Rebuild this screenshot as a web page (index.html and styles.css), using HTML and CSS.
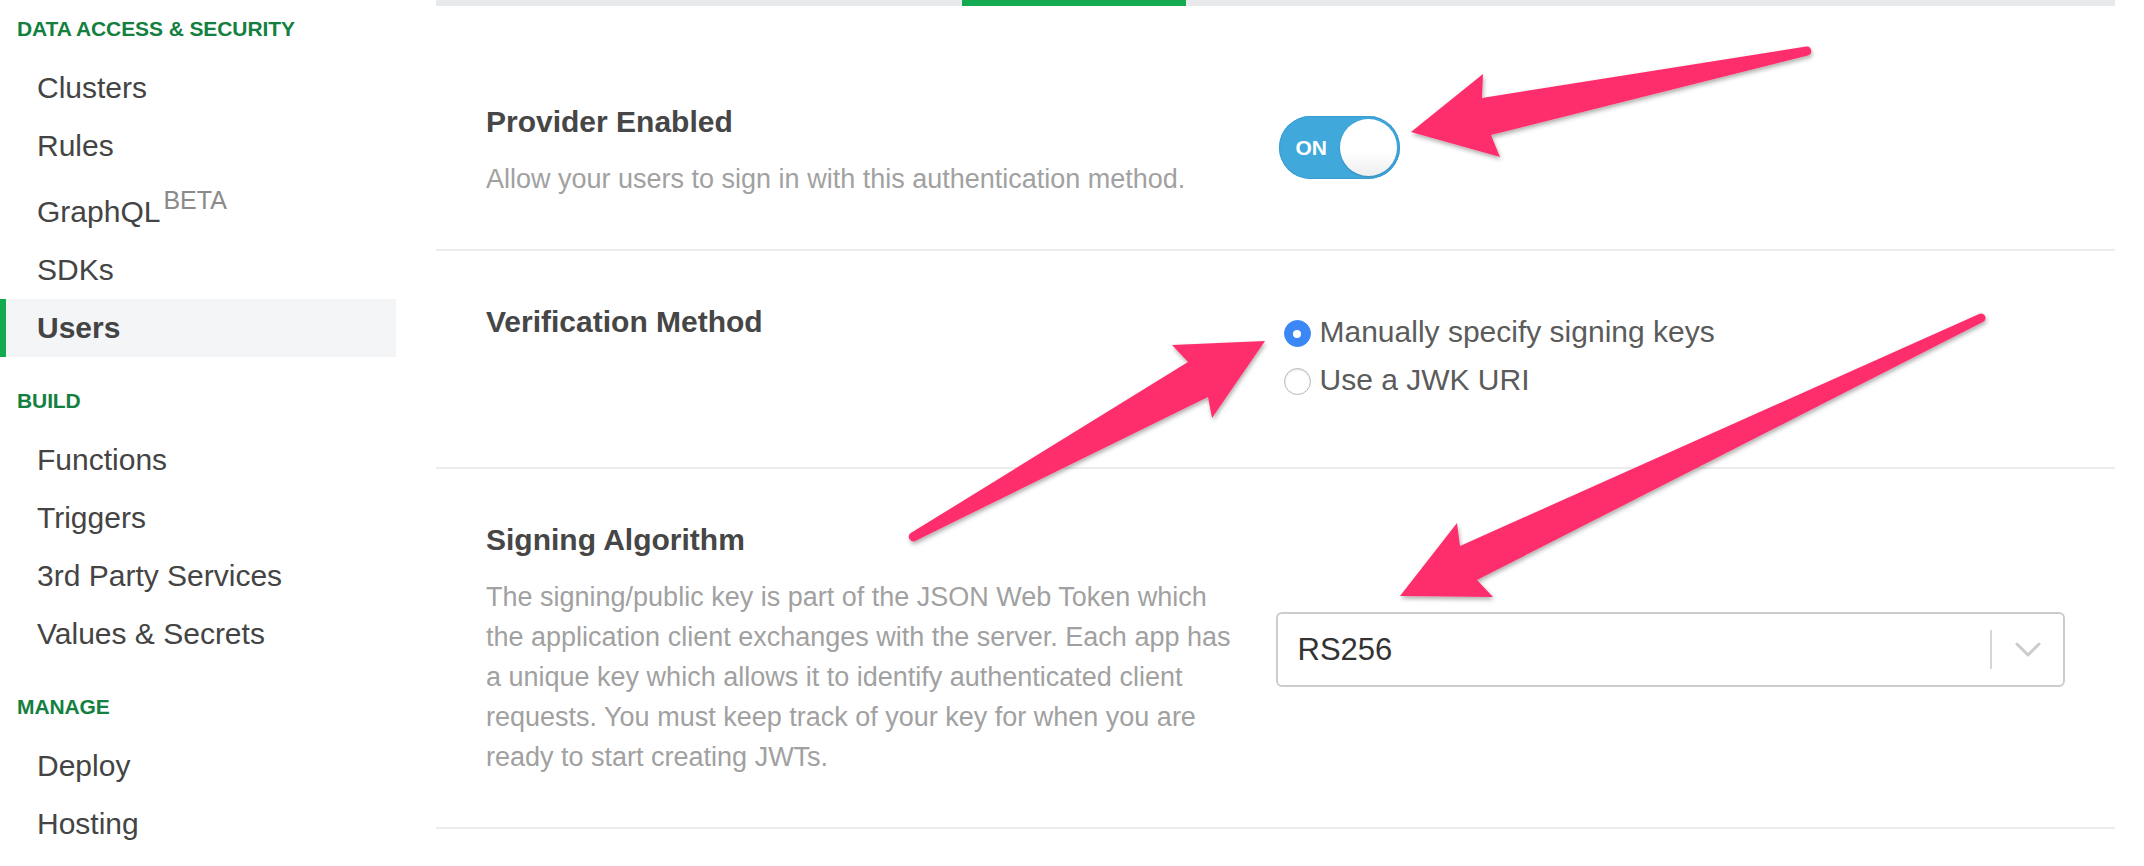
FILE: index.html
```html
<!DOCTYPE html>
<html lang="en">
<head>
<meta charset="utf-8">
<title>Users - Custom JWT Authentication</title>
<link rel="stylesheet" href="styles.css">
</head>
<body>
<div class="app">
  <nav class="sidebar">
    <div class="nav-header nav-header-first">DATA ACCESS &amp; SECURITY</div>
    <a class="nav-item">Clusters</a>
    <a class="nav-item">Rules</a>
    <a class="nav-item">GraphQL<sup class="beta">BETA</sup></a>
    <a class="nav-item">SDKs</a>
    <a class="nav-item nav-item-active">Users</a>
    <div class="nav-header">BUILD</div>
    <a class="nav-item">Functions</a>
    <a class="nav-item">Triggers</a>
    <a class="nav-item">3rd Party Services</a>
    <a class="nav-item">Values &amp; Secrets</a>
    <div class="nav-header">MANAGE</div>
    <a class="nav-item">Deploy</a>
    <a class="nav-item">Hosting</a>
  </nav>

  <main class="main">
    <div class="tabbar"><div class="tab-active"></div></div>

    <section class="row row-first">
      <div class="label">
        <h3 class="title">Provider Enabled</h3>
        <p class="desc">Allow your users to sign in with this authentication method.</p>
      </div>
      <div class="control">
        <div class="toggle">
          <span class="toggle-text">ON</span>
          <span class="knob"></span>
        </div>
      </div>
    </section>

    <section class="row row-top">
      <div class="label">
        <h3 class="title">Verification Method</h3>
      </div>
      <div class="control">
        <div class="radio-group">
          <label class="radio-row">
            <span class="radio radio-checked"><span class="radio-dot"></span></span>
            <span class="radio-text">Manually specify signing keys</span>
          </label>
          <label class="radio-row">
            <span class="radio"></span>
            <span class="radio-text">Use a JWK URI</span>
          </label>
        </div>
      </div>
    </section>

    <section class="row">
      <div class="label">
        <h3 class="title">Signing Algorithm</h3>
        <p class="desc">The signing/public key is part of the JSON Web Token which the application client exchanges with the server. Each app has a unique key which allows it to identify authenticated client requests. You must keep track of your key for when you are ready to start creating JWTs.</p>
      </div>
      <div class="control">
        <div class="select">
          <span class="select-value">RS256</span>
          <span class="select-sep"></span>
          <span class="select-indicator">
            <svg class="chevron" width="26" height="15" viewBox="0 0 26 15"><polyline points="2,2 13,13 24,2" fill="none" stroke="#cccccc" stroke-width="3" stroke-linecap="round" stroke-linejoin="round"/></svg>
          </span>
        </div>
      </div>
    </section>
  </main>
</div>

<svg class="annotations" width="2144" height="866" viewBox="0 0 2144 866">
  <defs>
    <filter id="arrowShadow" x="-10%" y="-10%" width="120%" height="130%">
      <feDropShadow dx="1" dy="2.5" stdDeviation="2" flood-color="#000" flood-opacity="0.32"/>
    </filter>
  </defs>
  <g fill="#fe2e6c" filter="url(#arrowShadow)">
    <path d="M1806.1 46.6 L1482 98 L1483 74 L1411 132 L1500 157 L1491 135 L1807.9 55.4 A4.5 4.5 0 0 0 1806.1 46.6 Z"/>
    <path d="M910.8 533.1 L1188 362 L1172 345 L1265 341 L1212 418 L1208 397 L915.2 540.9 A4.5 4.5 0 0 1 910.8 533.1 Z"/>
    <path d="M1979.1 313.9 L1460 546 L1457 523 L1400 596 L1493 597 L1477 580 L1982.9 322.1 A4.5 4.5 0 0 0 1979.1 313.9 Z"/>
  </g>
</svg>
</body>
</html>
```
FILE: styles.css
```css
html, body {
  margin: 0;
  padding: 0;
  width: 2144px;
  height: 866px;
  overflow: hidden;
  background: #ffffff;
}

body {
  position: relative;
  font-family: "Liberation Sans", Arial, Helvetica, sans-serif;
  color: #464646;
}

.app {
  display: flex;
  align-items: flex-start;
}

/* Sidebar */
.sidebar {
  width: 396px;
  flex: none;
  padding-top: 17px;
}

.nav-header {
  margin: 32px 0 18px;
  padding-left: 17px;
  font-size: 21px;
  line-height: 24px;
  font-weight: bold;
  color: #13803f;
  letter-spacing: -0.1px;
}

.nav-header-first {
  margin-top: 0;
}

.nav-item {
  display: block;
  padding-left: 37px;
  font-size: 30px;
  line-height: 58px;
  color: #444444;
  white-space: nowrap;
}

.nav-item-active {
  font-weight: bold;
  background: #f4f5f6;
  border-left: 6px solid #13aa52;
  padding-left: 31px;
}

.beta {
  margin-left: 3px;
  font-size: 25px;
  line-height: 50px;
  vertical-align: 13px;
  color: #8a8a8a;
  font-weight: normal;
}

/* Main panel */
.main {
  width: 1679px;
  flex: none;
  margin-left: 40px;
}

.tabbar {
  height: 6px;
  background: #e8e9eb;
}

.tab-active {
  width: 224px;
  height: 6px;
  margin-left: 526px;
  background: #13aa52;
}

.row {
  display: grid;
  grid-template-columns: 1fr 1fr;
  align-items: center;
  padding: 53px 50px 50px;
  border-bottom: 2px solid #ececec;
}

.row-first {
  padding-top: 98px;
}

.row-top {
  align-items: start;
  padding-bottom: 63px;
}

.title {
  margin: 0;
  font-size: 30px;
  line-height: 36px;
  font-weight: bold;
  color: #464646;
}

.desc {
  margin: 19px 0 0;
  max-width: 756px;
  font-size: 27px;
  line-height: 40px;
  color: #a1a1a1;
}

/* Toggle */
.toggle {
  width: 121px;
  height: 63px;
  box-sizing: border-box;
  margin: 0 0 8px 3px;
  padding: 3px;
  display: flex;
  align-items: center;
  border-radius: 32px;
  background: #41a8dc;
  box-shadow: inset 0 0 0 1px #3a9bd2;
}

.toggle-text {
  margin-left: 14px;
  font-size: 21px;
  font-weight: bold;
  color: #ffffff;
}

.knob {
  margin-left: auto;
  width: 57px;
  height: 57px;
  border-radius: 50%;
  background: linear-gradient(#ffffff 55%, #eeeeee);
  box-shadow: 0 1px 2px rgba(0, 0, 0, 0.18);
}

/* Radios */
.radio-group {
  padding-top: 4px;
  margin-left: 8px;
}

.radio-row {
  display: flex;
  align-items: center;
  height: 48px;
}

.radio {
  width: 27px;
  height: 27px;
  box-sizing: border-box;
  margin: 3px 9px 0 0;
  border-radius: 50%;
  background: #ffffff;
  border: 1px solid #b8b8b8;
  box-shadow: inset 0 1px 2px rgba(0, 0, 0, 0.12);
  display: flex;
  align-items: center;
  justify-content: center;
  flex: none;
}

.radio-checked {
  background: #3b87f5;
  border-color: #3b87f5;
  box-shadow: none;
}

.radio-dot {
  width: 8px;
  height: 8px;
  border-radius: 50%;
  background: #ffffff;
}

.radio-text {
  font-size: 30px;
  line-height: 48px;
  color: #5b5b5b;
}

/* Select */
.select {
  height: 75px;
  box-sizing: border-box;
  display: flex;
  align-items: center;
  border: 2px solid #cccccc;
  border-radius: 6px;
  background: #ffffff;
}

.select-value {
  flex: 1;
  padding-left: 20px;
  font-size: 31px;
  color: #333333;
}

.select-sep {
  width: 2px;
  height: 39px;
  background: #d6d6d6;
}

.select-indicator {
  width: 71px;
  display: flex;
  align-items: center;
  justify-content: center;
}

.chevron {
  display: block;
}

/* Annotation overlay */
.annotations {
  position: absolute;
  left: 0;
  top: 0;
  pointer-events: none;
}
```
